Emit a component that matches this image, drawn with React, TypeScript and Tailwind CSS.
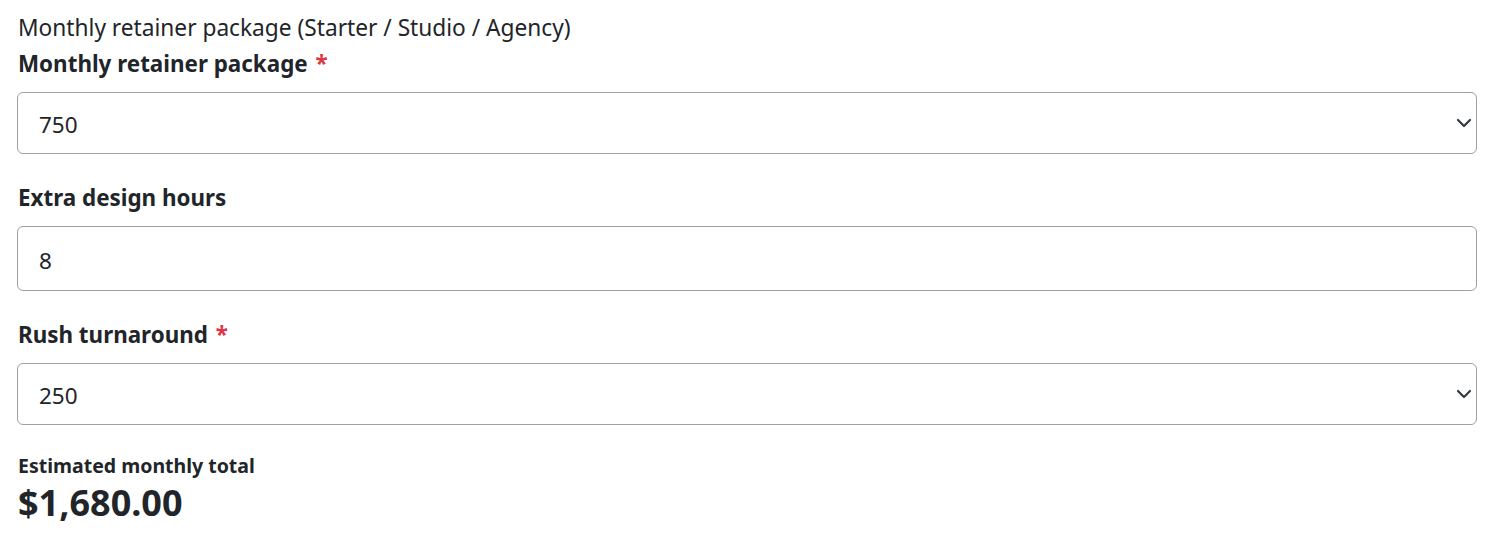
import React, { useState } from 'react';

function Chevron() {
  return (
    <svg
      className="pointer-events-none absolute right-[5px] top-1/2 h-[16px] w-[16px] -translate-y-1/2"
      viewBox="0 0 16 16"
      fill="none"
      stroke="#343a40"
      strokeWidth="2.2"
      strokeLinecap="round"
      strokeLinejoin="round"
    >
      <path d="m2 5 6 6 6-6" />
    </svg>
  );
}

function SelectField({ value, options, onChange }: { value: string; options: string[]; onChange: (v: string) => void }) {
  return (
    <div className="relative">
      <select
        value={value}
        onChange={(e) => onChange(e.target.value)}
        className="block h-[62px] w-full appearance-none rounded-[6px] border border-[#a0a0a0] bg-white pt-[3px] pl-[21px] pr-[48px] text-[22.5px] text-[#212529] outline-none"
      >
        {options.map((o) => (
          <option key={o} value={o}>
            {o}
          </option>
        ))}
      </select>
      <Chevron />
    </div>
  );
}

export default function App() {
  const [pkg, setPkg] = useState('750');
  const [hours, setHours] = useState('8');
  const [rush, setRush] = useState('250');

  const total = Number(pkg) + Number(hours || 0) * 85 + Number(rush);

  return (
    <div className="min-h-screen bg-white pl-[17px] pr-[19px] pt-[11px] text-[#212529] font-['Noto_Sans',sans-serif]">
      <div className="pl-px text-[22.7px] leading-[34px]">Monthly retainer package (Starter / Studio / Agency)</div>

      <label className="mt-[2px] block pl-px text-[22.4px] font-bold leading-[34px]">
        Monthly retainer package <span className="ml-[2px] text-[#dc3545]">*</span>
      </label>
      <div className="mt-[11px]">
        <SelectField value={pkg} options={['450', '750', '1200']} onChange={setPkg} />
      </div>

      <label className="mt-[27px] block pl-px text-[22.4px] font-bold leading-[34px]">Extra design hours</label>
      <input
        type="number"
        value={hours}
        onChange={(e) => setHours(e.target.value)}
        className="mt-[11px] block h-[65px] w-full rounded-[6px] border border-[#a0a0a0] bg-white pt-[3px] px-[21px] text-[22.5px] text-[#212529] outline-none [appearance:textfield] [&::-webkit-inner-spin-button]:appearance-none"
      />

      <label className="mt-[27px] block pl-px text-[22.4px] font-bold leading-[34px]">
        Rush turnaround <span className="ml-[2px] text-[#dc3545]">*</span>
      </label>
      <div className="mt-[11px]">
        <SelectField value={rush} options={['0', '250', '500']} onChange={setRush} />
      </div>

      <div className="mt-[26px] pl-px text-[19.5px] font-bold leading-[30px]">Estimated monthly total</div>
      <div className="pl-px text-[36px] font-bold leading-[44px]">
        ${total.toLocaleString('en-US', { minimumFractionDigits: 2, maximumFractionDigits: 2 })}
      </div>
    </div>
  );
}
